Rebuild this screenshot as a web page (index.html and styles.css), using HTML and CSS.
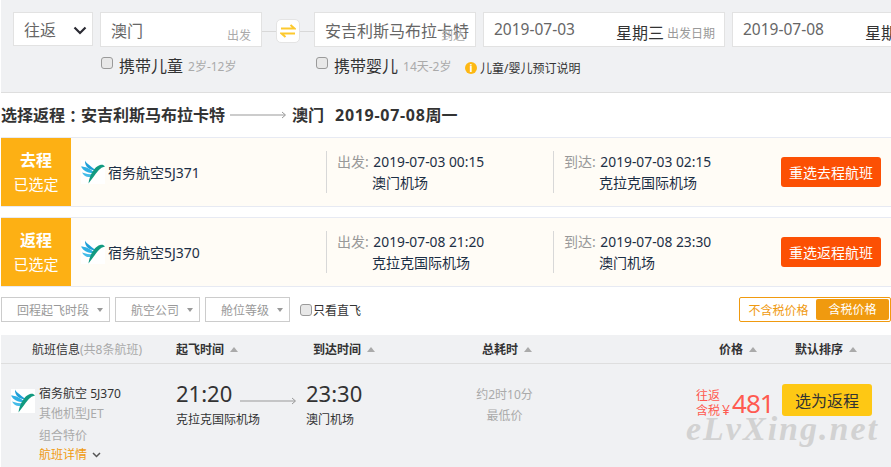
FILE: index.html
```html
<!DOCTYPE html>
<html lang="zh">
<head>
<meta charset="utf-8">
<title>选择返程</title>
<link rel="stylesheet" href="styles.css">
</head>
<body>
<div class="page">
  <section class="search">
    <div class="fields">
      <div class="box trip">往返<svg class="chev" width="14" height="9" viewBox="0 0 14 9"><path d="M1.500 1.500 7 7l5.500-5.500" fill="none" stroke="#2b2b33" stroke-width="2.200"/></svg></div>
      <div class="box city">澳门<span class="hint">出发</span></div>
      <div class="swap"><span class="swapbtn"><svg width="16" height="14" viewBox="0 0 16 14"><path d="M1 4.500h13.500L10.500 1M15 9.500H1.500L5.500 13" fill="none" stroke="#fdc92e" stroke-width="2"/></svg></span></div>
      <div class="box city">安吉利斯马布拉卡特<span class="hint">到达</span></div>
      <div class="box date"><span class="dval">2019-07-03</span><span class="week">星期三</span><span class="hint-date">出发日期</span></div>
      <div class="box date"><span class="dval">2019-07-08</span><span class="week">星期一</span></div>
    </div>
    <div class="opts">
      <label class="opt opt1"><span class="check"></span>携带儿童<small>2岁-12岁</small></label>
      <label class="opt opt2"><span class="check"></span>携带婴儿<small>14天-2岁</small></label>
      <span class="info"><span class="infoicon">i</span>儿童/婴儿预订说明</span>
    </div>
  </section>

  <h1 class="title">选择返程<span class="colon">：</span>安吉利斯马布拉卡特<svg class="tarrow" width="57" height="8" viewBox="0 0 57 8"><path d="M0 4h55M52 1l3.500 3-3.500 3" fill="none" stroke="#999"/></svg>澳门<span class="tdate"><span class="tnum">2019-07-08</span>周一</span></h1>

  <section class="card">
    <div class="tag"><b>去程</b><span>已选定</span></div>
    <div class="air">
      <svg class="logo" viewBox="0 0 24 24"><use href="#bird"/></svg>
      <span class="airname">宿务航空<em>5J371</em></span>
    </div>
    <div class="leg"><div><i>出发:</i> 2019-07-03 00:15</div><div class="port">澳门机场</div></div>
    <div class="leg leg2"><div><i>到达:</i> 2019-07-03 02:15</div><div class="port">克拉克国际机场</div></div>
    <button class="redo">重选去程航班</button>
  </section>
  <section class="card card2">
    <div class="tag"><b>返程</b><span>已选定</span></div>
    <div class="air">
      <svg class="logo" viewBox="0 0 24 24"><use href="#bird"/></svg>
      <span class="airname">宿务航空<em>5J370</em></span>
    </div>
    <div class="leg"><div><i>出发:</i> 2019-07-08 21:20</div><div class="port">克拉克国际机场</div></div>
    <div class="leg leg2"><div><i>到达:</i> 2019-07-08 23:30</div><div class="port">澳门机场</div></div>
    <button class="redo">重选返程航班</button>
  </section>

  <section class="filters">
    <div class="drop d1">回程起飞时段<span class="caret"></span></div>
    <div class="drop d2">航空公司<span class="caret"></span></div>
    <div class="drop d3">舱位等级<span class="caret"></span></div>
    <label class="direct"><span class="check"></span>只看直飞</label>
    <div class="tax"><span class="taxoff">不含税价格</span><span class="taxon">含税价格</span></div>
  </section>

  <section class="thead">
    <span class="h h-info">航班信息<small>(共8条航班)</small></span>
    <span class="h h-dep"><b>起飞时间</b><span class="up"></span></span>
    <span class="h h-arr"><b>到达时间</b><span class="up"></span></span>
    <span class="h h-dur"><b>总耗时</b><span class="up"></span></span>
    <span class="h h-price"><b>价格</b><span class="up"></span></span>
    <span class="h h-sort"><b>默认排序</b><span class="up"></span></span>
  </section>

  <section class="row">
    <svg class="rlogo" viewBox="0 0 24 24"><use href="#bird"/></svg>
    <div class="rinfo">
      <div class="rname">宿务航空 <em>5J370</em></div>
      <div class="rgray">其他机型JET</div>
      <div class="rgray rdeal">组合特价</div>
      <div class="rlink">航班详情<svg width="9" height="6" viewBox="0 0 9 6"><path d="M1 1l3.500 3.500L8 1" fill="none" stroke="#555" stroke-width="1.500"/></svg></div>
    </div>
    <div class="rtime rdep"><strong>21:20</strong><span>克拉克国际机场</span></div>
    <svg class="rarrow" width="57" height="8" viewBox="0 0 57 8"><path d="M0 4h55M52 1l3.500 3-3.500 3" fill="none" stroke="#999"/></svg>
    <div class="rtime rarr"><strong>23:30</strong><span>澳门机场</span></div>
    <div class="rdur"><div>约2时10分</div><div>最低价</div></div>
    <div class="rprice"><span class="plabel">往返<br>含税</span><span class="yen">¥</span><span class="pnum">481</span></div>
    <button class="pick">选为返程</button>
  </section>
  <div class="mark">eLvXing.net</div>
</div>
<svg class="defs" width="0" height="0">
  <defs>
    <g id="bird">
      <rect width="24" height="24" fill="#fff"/>
      <path d="M4 0.500C5 3 9 5.500 15 10.500 9 10.500 3.500 7 4 0.500Z" fill="#1f9fd8"/>
      <path d="M0 6.500C4 6.500 9 8.500 14 13 8 13.500 2.500 11.500 0 6.500Z" fill="#2fb0e4"/>
      <path d="M1 12.500C5 13.500 8 14.500 12.500 14.500 9.500 18.500 4 18 1 12.500Z" fill="#45bce8"/>
      <path d="M7.500 23.500C8.500 15 13.500 6.500 19 5 21 4.300 22.500 4.500 24 6.500L20.500 7.800C16.500 10.500 13.500 16 7.500 23.500Z" fill="#129a80"/>
    </g>
  </defs>
</svg>
</body>
</html>
```
FILE: styles.css
```css
* { box-sizing: border-box; }
html, body { margin: 0; padding: 0; height: 467px; overflow: hidden; background: #fff; }
body { font-family: "Noto Sans", "Noto Sans CJK SC", sans-serif; color: #333; }
.page { position: relative; width: 891px; height: 467px; overflow: hidden; padding-left: 1px; }
em, i { font-style: normal; }

.search { width: 890px; height: 93px; background: #f0f1f3; border-bottom: 1px solid #dedede; padding: 12px 0 0 12px; overflow: hidden; }
.fields { display: flex; align-items: flex-start; width: 1000px; }
.box { background: #fff; border: 1px solid #e2e2e2; height: 35px; font-size: 16px; color: #666; display: flex; align-items: center; position: relative; white-space: nowrap; }
.trip { width: 80px; height: 34px; padding-left: 10px; margin-right: 7px; }
.chev { position: absolute; right: 5px; top: 13px; }
.city { width: 162px; padding-left: 10px; overflow: hidden; }
.hint { position: absolute; right: 10px; top: 13px; font-size: 12px; color: #aaa; }
.swap { width: 52px; height: 35px; display: flex; align-items: center; justify-content: center; background: linear-gradient(#d8d8d8, #d8d8d8) center 19px / 100% 1px no-repeat; padding-top: 2px; }
.swapbtn { width: 24px; height: 24px; background: #fff; border: 1px solid #e4e4e4; border-radius: 5px; display: flex; align-items: center; justify-content: center; }
.date { width: 242px; margin-left: 7px; padding-left: 10px; }
.dval { font-size: 15.500px; color: #666; position: relative; top: -1px; }
.week { font-size: 16px; color: #333; margin-left: 41px; position: relative; top: 2px; }
.hint-date { font-size: 12px; color: #999; margin-left: 3px; position: relative; top: 3px; }

.opts { display: flex; align-items: center; height: 30px; margin-top: 3px; font-size: 16px; color: #333; }
.opt { display: flex; align-items: center; white-space: nowrap; }
.opt small { font-size: 12px; color: #aaa; margin-left: 5px; position: relative; top: 1px; }
.opt1 { margin-left: 88px; width: 215px; }
.opt2 { width: 149px; }
.check { width: 12px; height: 12px; border: 1px solid #9a9a9a; background: #e8e8e8; border-radius: 3px; margin-right: 6px; position: relative; top: -2px; flex: none; }
.info { display: flex; align-items: center; font-size: 12px; color: #333; white-space: nowrap; position: relative; top: 3px; }
.infoicon { width: 12px; height: 12px; border-radius: 50%; background: #fdb813; color: #fff; font-size: 10px; line-height: 12px; text-align: center; margin-right: 3px; font-weight: 700; }

.title { margin: 0; height: 44px; font-size: 16px; line-height: 44px; font-weight: 700; color: #333; display: flex; align-items: center; white-space: nowrap; }
.colon { font-family: "Noto Sans CJK TC", sans-serif; }
.tarrow { margin: 0 5px 0 5px; }
.tdate { margin-left: 11px; }
.tnum { letter-spacing: .7px; }

.card { width: 890px; height: 70px; background: #fffcf6; border-top: 1px solid #e7eaf3; border-bottom: 1px solid #e7eaf3; display: flex; align-items: center; color: #1d2f45; font-size: 13.800px; }
.card2 { margin-top: 10px; }
.tag { width: 70px; height: 68px; background: #fdb014; color: #fff; display: flex; flex-direction: column; align-items: center; justify-content: center; font-size: 15px; line-height: 24px; flex: none; }
.tag b { font-size: 16px; }
.air { width: 255px; display: flex; align-items: center; padding-left: 10px; flex: none; }
.logo { width: 24px; height: 24px; margin-right: 3px; flex: none; }
.airname { font-size: 14px; }
.airname em { font-size: 14px; }
.leg { width: 227px; height: 42px; border-left: 1px solid #d8d8d8; padding-left: 10px; line-height: 22px; flex: none; white-space: nowrap; }
.leg i { font-size: 14px; color: #999; margin-right: 1px; }
.port { font-size: 14px; padding-left: 35px; line-height: 20px; }
.leg2 { width: 228px; }
.redo { width: 100px; height: 30px; border: 0; border-radius: 3px; background: #fc5004; color: #fff; font: inherit; font-size: 14px; padding: 0; flex: none; }

.filters { display: flex; align-items: center; margin-top: 10px; height: 25px; width: 890px; font-size: 12px; color: #999; position: relative; }
.drop { height: 25px; border: 1px solid #ccc; display: flex; align-items: center; justify-content: flex-end; padding-right: 6px; white-space: nowrap; margin-right: 5px; }
.d1 { width: 109px; }
.d2 { width: 85px; }
.d3 { width: 85px; margin-right: 10px; }
.caret { width: 0; height: 0; border: 3.500px solid transparent; border-top: 4px solid #999; border-bottom: 0; margin-left: 8px; }
.direct { display: flex; align-items: center; color: #333; }
.direct .check { margin-right: 1px; top: 0; }
.tax { position: absolute; right: 0; top: 0; width: 152px; height: 25px; border: 1px solid #f09a0f; border-radius: 2px; display: flex; align-items: center; color: #f09a0f; padding: 1px; background: #fff; }
.taxoff { width: 75px; text-align: center; }
.taxon { width: 73px; height: 21px; line-height: 21px; background: #f09a0f; color: #fff; text-align: center; border-radius: 2px; }

.thead { margin-top: 13px; width: 890px; height: 29px; background: #f0f1f3; border-bottom: 1px solid #dedede; display: flex; align-items: center; font-size: 12px; color: #333; white-space: nowrap; }
.thead b { font-weight: 700; }
.h { flex: none; display: flex; align-items: center; }
.h small { font-size: 12px; color: #aaa; }
.h-info { width: 175px; padding-left: 31px; }
.h-dep { width: 137px; }
.h-arr { width: 169px; }
.h-dur { width: 237px; }
.h-price { width: 76px; }
.up { width: 0; height: 0; border: 4px solid transparent; border-bottom: 5px solid #aaa; border-top: 0; margin-left: 6px; }

.row { width: 890px; height: 103px; background: #f0f1f3; display: flex; align-items: flex-start; }
.rlogo { width: 24px; height: 24px; margin: 25px 4px 0 10px; flex: none; }
.rinfo { width: 137px; padding-top: 20px; flex: none; font-size: 12px; line-height: 20px; }
.rname { color: #333; }
.rgray { color: #aaa; }
.rdeal { margin-top: 2px; }
.rlink { color: #f09a0f; display: flex; align-items: center; gap: 5px; margin-top: -1px; }
.rtime { flex: none; padding-top: 14px; display: flex; flex-direction: column; }
.rtime strong { font-weight: 400; font-size: 22px; line-height: 30px; color: #333; }
.rtime span { font-size: 12px; line-height: 18px; margin-top: 3px; white-space: nowrap; }
.rdep { width: 64px; }
.rarrow { margin: 33px 9px 0 0; flex: none; }
.rarr { width: 126px; }
.rdur { width: 145px; padding-top: 20px; flex: none; font-size: 12px; color: #aaa; line-height: 21px; text-align: center; }
.rprice { width: 205px; flex: none; padding: 24px 0 0 119px; display: flex; align-items: flex-end; color: #ff5a50; white-space: nowrap; }
.plabel { font-size: 12px; line-height: 15px; }
.yen { font-size: 14px; line-height: 17px; margin-left: 2px; }
.pnum { font-size: 26px; line-height: 30px; letter-spacing: -1px; margin-left: 2px; }
.pick { width: 90px; height: 32px; margin-top: 20px; background: #fec814; border: 0; border-radius: 3px; font: inherit; font-size: 16px; color: #333; padding: 0; flex: none; }

.mark { position: absolute; left: 686px; top: 410px; font-family: "Liberation Serif", serif; font-style: italic; font-weight: 700; font-size: 34px; letter-spacing: 2px; color: #d2d2d2; white-space: nowrap; }
.defs { position: absolute; }
```
